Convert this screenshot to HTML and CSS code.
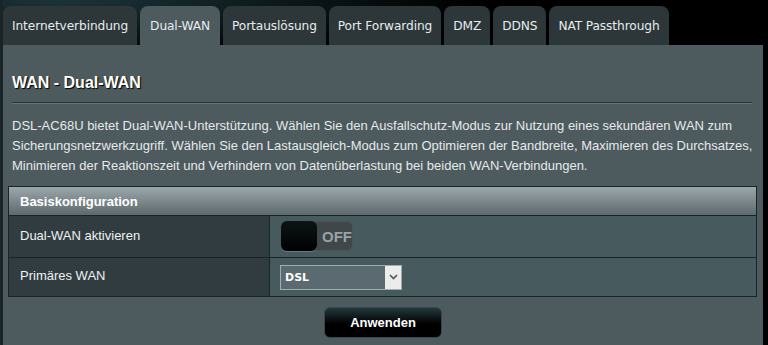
FILE: index.html
```html
<!DOCTYPE html>
<html lang="de">
<head>
<meta charset="utf-8">
<title>WAN - Dual-WAN</title>
<link rel="stylesheet" href="styles.css">
</head>
<body>
<div class="page">
  <nav class="tabs">
    <div class="tab">Internetverbindung</div>
    <div class="tab active">Dual-WAN</div>
    <div class="tab">Portauslösung</div>
    <div class="tab">Port Forwarding</div>
    <div class="tab">DMZ</div>
    <div class="tab">DDNS</div>
    <div class="tab">NAT Passthrough</div>
  </nav>
  <section class="panel">
    <h1 class="title">WAN - Dual-WAN</h1>
    <div class="rule"></div>
    <p class="desc">DSL-AC68U bietet Dual-WAN-Unterstützung. Wählen Sie den Ausfallschutz-Modus zur Nutzung eines sekundären WAN zum<br>Sicherungsnetzwerkzugriff. Wählen Sie den Lastausgleich-Modus zum Optimieren der Bandbreite, Maximieren des Durchsatzes,<br>Minimieren der Reaktionszeit und Verhindern von Datenüberlastung bei beiden WAN-Verbindungen.</p>
    <div class="config">
      <div class="config-head">Basiskonfiguration</div>
      <div class="row row1">
        <div class="label">Dual-WAN aktivieren</div>
        <div class="value">
          <div class="toggle"><span class="knob"></span><span class="off">OFF</span></div>
        </div>
      </div>
      <div class="row row2">
        <div class="label">Primäres WAN</div>
        <div class="value">
          <div class="select"><span class="sel-text">DSL</span><span class="sel-arrow"><svg width="9" height="6" viewBox="0 0 9 6"><path d="M1 1 L4.5 4.5 L8 1" fill="none" stroke="#555" stroke-width="1.6"/></svg></span></div>
        </div>
      </div>
    </div>
    <div class="actions"><button class="apply">Anwenden</button></div>
  </section>
</div>
</body>
</html>
```
FILE: styles.css
```css
html, body {
  margin: 0;
  padding: 0;
}
body {
  width: 768px;
  height: 345px;
  overflow: hidden;
  background: radial-gradient(ellipse 420px 60px at 60px 0px, #1c343a 0%, #0a1416 60%, #000 100%);
  font-family: "Liberation Sans", Arial, sans-serif;
}
.page {
  display: flex;
  flex-direction: column;
  padding-top: 6px;
  padding-left: 3px;
  height: 339px;
  background: linear-gradient(to right, #1a2326 0, #1a2326 3px, transparent 3px);
}
.tabs {
  display: flex;
  gap: 3px;
  height: 39px;
}
.tab {
  display: flex;
  align-items: center;
  padding: 0 9px 0 9px;
  background: #2d3639;
  color: #e6ecee;
  border-radius: 8px 8px 0 0;
  font-family: "DejaVu Sans", Verdana, sans-serif;
  font-size: 12.2px;
  letter-spacing: -0.1px;
}
.tab.active {
  background: #4d5a5e;
  padding: 0 10px;
}
.panel {
  width: 760px;
  flex: 1;
  background: #4d5a5e;
  box-sizing: border-box;
  padding: 28px 6px 0 5px;
}
.title {
  margin: 0 0 0 4px;
  font-size: 16px;
  font-weight: bold;
  color: #ffffff;
  line-height: 20px;
  text-shadow: 1px 1px 1px #000;
}
.rule {
  margin: 9px 5px 0 4px;
  height: 0;
  border-top: 1px solid #2b3437;
  border-bottom: 1px solid #66737a;
}
.desc {
  margin: 12px 0 0 4px;
  color: #e6e9ea;
  font-size: 13px;
  line-height: 20px;
  white-space: nowrap;
}
.config {
  margin-top: 10px;
  width: 749px;
  border: 1px solid #1a2327;
  box-sizing: border-box;
}
.config-head {
  height: 28px;
  display: flex;
  align-items: center;
  padding-left: 11px;
  background: linear-gradient(#9ca7ab, #5d696d);
  color: #fff;
  font-weight: bold;
  font-size: 13px;
  border-bottom: 1px solid #1a2327;
}
.row {
  display: grid;
  grid-template-columns: 261px 1fr;
}
.row1 {
  height: 41px;
  border-bottom: 1px solid #1a2327;
}
.row2 {
  height: 38px;
}
.label {
  background: #313c40;
  border-right: 1px solid #1a2327;
  color: #eef1f2;
  font-size: 13px;
  display: flex;
  align-items: center;
  padding-left: 11px;
  padding-bottom: 3px;
}
.value {
  background: #475a5e;
  display: flex;
  align-items: center;
  padding-left: 11px;
}
.toggle {
  display: flex;
  align-items: center;
  width: 72px;
  height: 30px;
  border-radius: 6px;
  background: #3f4749;
  box-sizing: border-box;
  border: 1px solid #4b5457;
  margin-top: -1px;
}
.knob {
  width: 36px;
  height: 30px;
  margin-left: -1px;
  border-radius: 6px;
  background: linear-gradient(#0c1416, #000);
  box-shadow: 0 1px 0 #6b787c;
}
.off {
  margin-left: 5px;
  color: #9aa2a4;
  font-weight: bold;
  font-size: 15px;
  font-family: "Liberation Sans", Arial, sans-serif;
}
.select {
  display: flex;
  width: 122px;
  height: 25px;
  box-sizing: border-box;
  border: 1px solid #a2abae;
  background: #5a6a70;
  margin-left: -1px;
}
.sel-text {
  flex: 1;
  display: flex;
  align-items: center;
  padding-left: 4px;
  color: #fff;
  font-weight: bold;
  font-size: 11px;
  font-family: "DejaVu Sans", Verdana, sans-serif;
}
.sel-arrow {
  width: 16px;
  background: #ebecec;
  display: flex;
  align-items: center;
  justify-content: center;
}
.actions {
  display: flex;
  padding-left: 316px;
  margin-top: 10px;
}
.apply {
  width: 118px;
  height: 31px;
  border-radius: 6px;
  border: 1px solid #3b474b;
  background: linear-gradient(#24383d, #000 55%, #000);
  color: #fff;
  font-family: "Liberation Sans", Arial, sans-serif;
  font-weight: bold;
  font-size: 13px;
  padding: 0;
}
```
